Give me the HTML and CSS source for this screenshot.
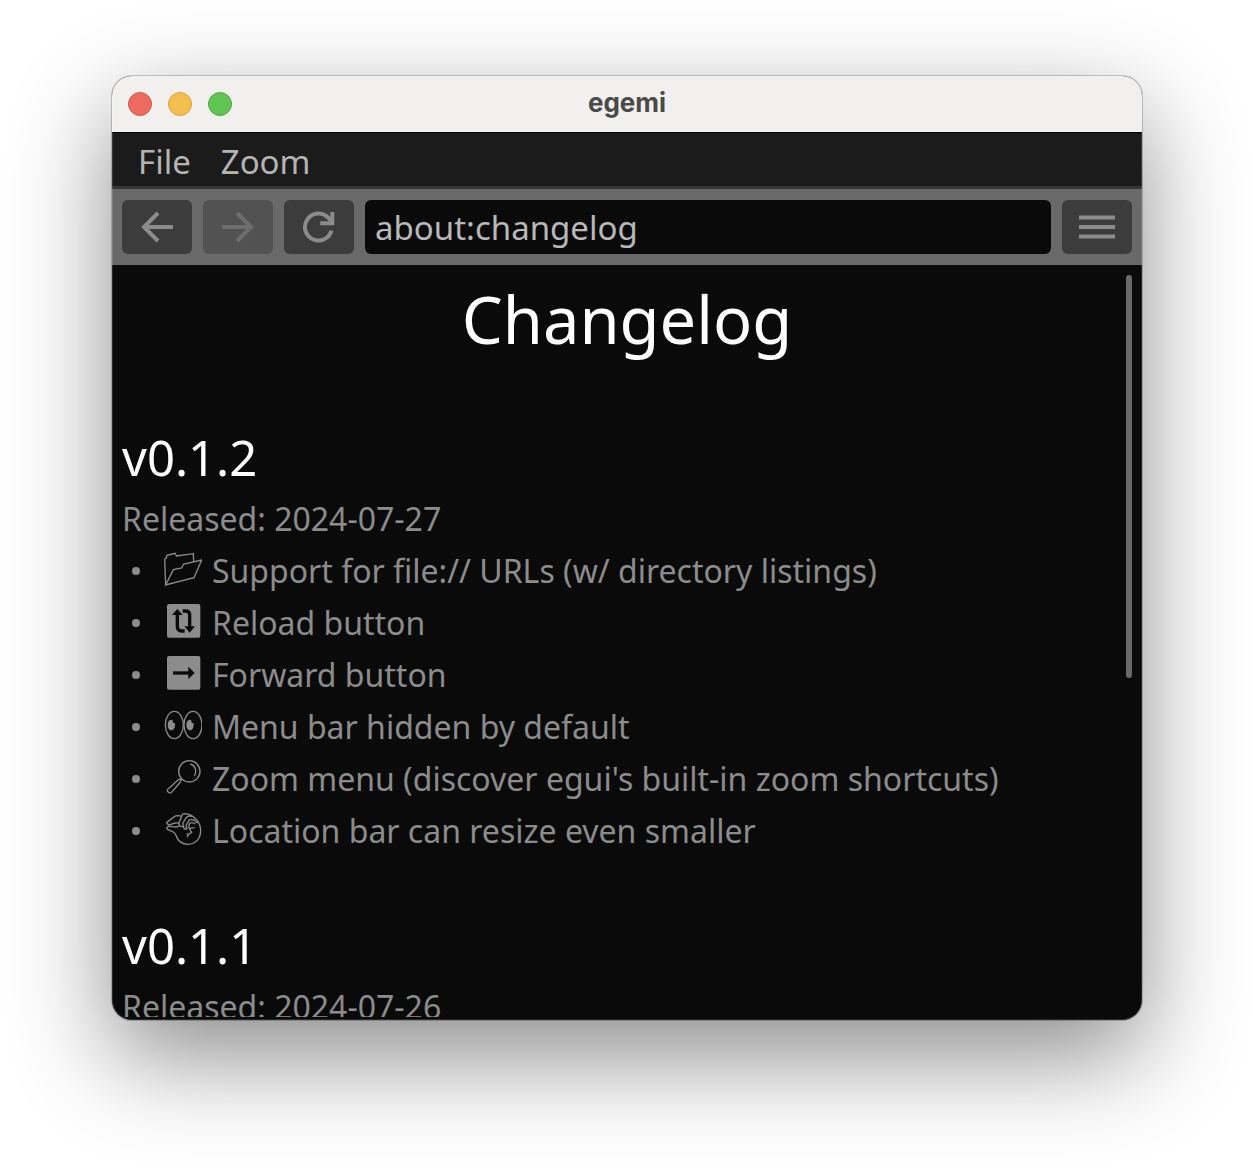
FILE: index.html
```html
<!DOCTYPE html>
<html lang="en">
<head>
<meta charset="utf-8">
<title>egemi</title>
<link rel="stylesheet" href="styles.css">
</head>
<body>
<div class="window">
  <header class="titlebar">
    <div class="lights">
      <button class="light close" aria-label="Close"></button>
      <button class="light minimize" aria-label="Minimize"></button>
      <button class="light maximize" aria-label="Maximize"></button>
    </div>
    <span class="title">egemi</span>
  </header>
  <nav class="menubar">
    <button class="menu">File</button>
    <button class="menu">Zoom</button>
  </nav>
  <form class="toolbar">
    <button class="tool" type="button" aria-label="Back">
      <svg viewBox="0 0 34 34" class="glyph"><path d="M33 17H4M18 3 4 17 18 31"/></svg>
    </button>
    <button class="tool" type="button" aria-label="Forward" disabled>
      <svg viewBox="0 0 34 34" class="glyph"><path d="M1 17H30M16 3 30 17 16 31"/></svg>
    </button>
    <button class="tool" type="button" aria-label="Reload">
      <svg viewBox="0 0 34 34" class="glyph"><path d="M29.500 20.500A13.500 13.500 0 1 1 26 7.500L30 12"/><path d="M30.300 2V13.200H18.300"/></svg>
    </button>
    <input class="location" type="text" value="about:changelog" aria-label="Location" spellcheck="false">
    <button class="tool" type="button" aria-label="Menu">
      <svg viewBox="0 0 36 34" class="glyph wide"><path d="M0 7.500H36M0 17H36M0 26.500H36"/></svg>
    </button>
  </form>
  <main class="page">
    <h1>Changelog</h1>
    <section>
      <h2>v0.1.2</h2>
      <p>Released: 2024-07-27</p>
      <ul>
        <li>
          <svg class="icon" viewBox="150 21 120 120"><path d="M161 123 158 45 163 42 165 34 189 28 194 36 244 29 245 52M161 123 184 77 209 72 215 60 269 48 246 101Z"/></svg>
          Support for file:// URLs (w/ directory listings)
        </li>
        <li>
          <svg class="icon" viewBox="150 177 120 120"><rect class="solid" x="165" y="180" width="100" height="101" rx="6"/><path class="cut" d="M196 208V246Q196 261 209 261H218M212 201H221Q233 201 233 213V252"/><path class="ink" d="M180 213 196 195 212 213ZM217 247H249L233 266Z"/></svg>
          Reload button
        </li>
        <li>
          <svg class="icon" viewBox="150 18 120 120"><rect class="solid" x="165" y="21" width="100" height="101" rx="6"/><path class="cut" d="M183 72H232"/><path class="ink" d="M229 53 248 72 229 90Z"/></svg>
          Forward button
        </li>
        <li>
          <svg class="icon" viewBox="150 174 120 120"><ellipse cx="187" cy="228" rx="27" ry="41"/><ellipse cx="243" cy="228" rx="27" ry="41"/><path class="solid" d="M178 212Q182 212 182 216 181 224 189 222C190 234 186 244 178 244 171 244 167 237 167 228S171 212 178 212ZM234 212Q238 212 238 216 237 224 245 222C246 234 242 244 234 244 227 244 223 237 223 228S227 212 234 212Z"/></svg>
          Menu bar hidden by default
        </li>
        <li>
          <svg class="icon" viewBox="150 15 120 120"><circle cx="232" cy="52" r="32"/><path d="M235 30Q249 35 251 49 252 58 247 66M206 73 211 78M199 77 167 106Q164 111 169 115 174 119 179 115L205 84Q208 79 205 76 202 74 199 77Z"/></svg>
          Zoom menu (discover egui's built-in zoom shortcuts)
        </li>
        <li>
          <svg class="icon" viewBox="150 171 120 120"><path d="M209 187Q199 183 190 186L168 202Q162 206 166 210 169 213 176 211L190 207Q196 205 203 210M166 219Q162 223 168 227L184 234Q190 238 193 246 199 268 226 271 250 271 261 252 269 235 264 216 259 199 244 188 232 179 216 179 210 180 209 187L201 206Q200 214 206 217L214 218 217 225 224 226M166 219Q171 215 180 218L191 219Q199 219 202 214M216 217Q211 214 213 207L223 190Q228 184 239 187M226 225Q220 219 223 213L231 199Q236 195 246 198L256 207M231 223Q229 213 234 207 241 204 249 210M231 223 248 221M232 224 239 235Q234 241 224 240M232 239 225 249"/></svg>
          Location bar can resize even smaller
        </li>
      </ul>
    </section>
    <section>
      <h2>v0.1.1</h2>
      <p>Released: 2024-07-26</p>
    </section>
    <div class="scrollbar"></div>
  </main>
</div>
</body>
</html>
```

FILE: styles.css
```css
* { box-sizing: border-box; }

body {
  margin: 0;
  height: 100vh;
  padding: 76px 112px 148px;
  overflow: hidden;
  background: #fff;
  font-family: "Noto Sans", sans-serif;
  font-size: 32px;
}

button, input {
  font: inherit;
  border: 0;
  margin: 0;
}

.window {
  position: relative;
  display: flex;
  flex-direction: column;
  height: 100%;
  padding-bottom: 3px;
  border-radius: 20px;
  overflow: hidden;
  background: #0a0a0a;
  box-shadow: 0 0 0 1px rgba(0, 0, 0, .2), 0 36px 100px rgba(0, 0, 0, .46);
}

.window::after {
  content: "";
  position: absolute;
  inset: 0;
  border-radius: 20px;
  box-shadow: inset 0 0 0 1px rgba(255, 255, 255, .12);
  pointer-events: none;
}

.titlebar {
  display: grid;
  grid-template-columns: 1fr auto 1fr;
  align-items: center;
  flex: none;
  height: 56px;
  padding: 0 16px;
  background: #f2f0ef;
}

.lights { display: flex; gap: 16px; }

.light {
  width: 24px;
  height: 24px;
  padding: 0;
  border-radius: 50%;
  border: 1px solid;
}

.close { background: #ed6a5e; border-color: #d5554a; }
.minimize { background: #f5bf4f; border-color: #d9a13e; }
.maximize { background: #61c554; border-color: #4fa73f; }

.title {
  padding-bottom: 2px;
  font: bold 26px/32px Inter, sans-serif;
  color: #4a4a48;
}

.menubar {
  display: flex;
  flex: none;
  gap: 10px;
  height: 57px;
  padding: 4px 16px 0;
  background: #1b1b1b;
  border-top: 1px solid #000;
  border-bottom: 3px solid #373737;
}

.menu {
  padding: 0 10px;
  font-size: 33px;
  line-height: 50px;
  background: none;
  color: #b4b4b4;
}

.toolbar {
  display: flex;
  flex: none;
  gap: 11px;
  margin: 0;
  padding: 11px 10px;
  background: #696969;
}

.tool {
  display: flex;
  flex: none;
  align-items: center;
  justify-content: center;
  width: 70px;
  height: 54px;
  padding: 0;
  border-radius: 6px;
  background: #3c3c3c;
  color: #8c8c8c;
}

.tool:disabled { background: #525252; color: #6e6e6e; }

.glyph {
  width: 34px;
  height: 34px;
  fill: none;
  stroke: currentColor;
  stroke-width: 4;
}

.wide { width: 36px; }

.location {
  flex: 1;
  min-width: 0;
  height: 54px;
  padding: 0 10px;
  border-radius: 6px;
  background: #0a0a0a;
  color: #b8b8b8;
  font-size: 33px;
  outline: none;
}

.page {
  position: relative;
  flex: 1;
  min-height: 0;
  padding: 10px;
  overflow: hidden;
  color: #8c8c8c;
  line-height: 52px;
}

h1, h2, p, ul { margin: 0; padding: 0; }

h1, h2 { font-weight: 400; color: #fff; }

h1 {
  margin-bottom: 6px;
  font-size: 65px;
  line-height: 88px;
  text-align: center;
}

section { padding-top: 52px; }

h2 {
  font-size: 49px;
  line-height: 72px;
}

li {
  display: flex;
  align-items: center;
}

li::before {
  content: "";
  width: 8px;
  height: 8px;
  margin: 0 22px 0 10px;
  border-radius: 50%;
  background: #8c8c8c;
}

.icon {
  width: 40px;
  height: 40px;
  margin-right: 10px;
  fill: none;
  stroke: #8c8c8c;
  stroke-width: 4;
}

.solid { fill: #8c8c8c; stroke: none; }
.cut { stroke: #0a0a0a; stroke-width: 10; }
.ink { fill: #0a0a0a; stroke: none; }

.scrollbar {
  position: absolute;
  top: 10px;
  right: 10px;
  width: 6px;
  height: 403px;
  border-radius: 3px;
  background: #696969;
}
```
